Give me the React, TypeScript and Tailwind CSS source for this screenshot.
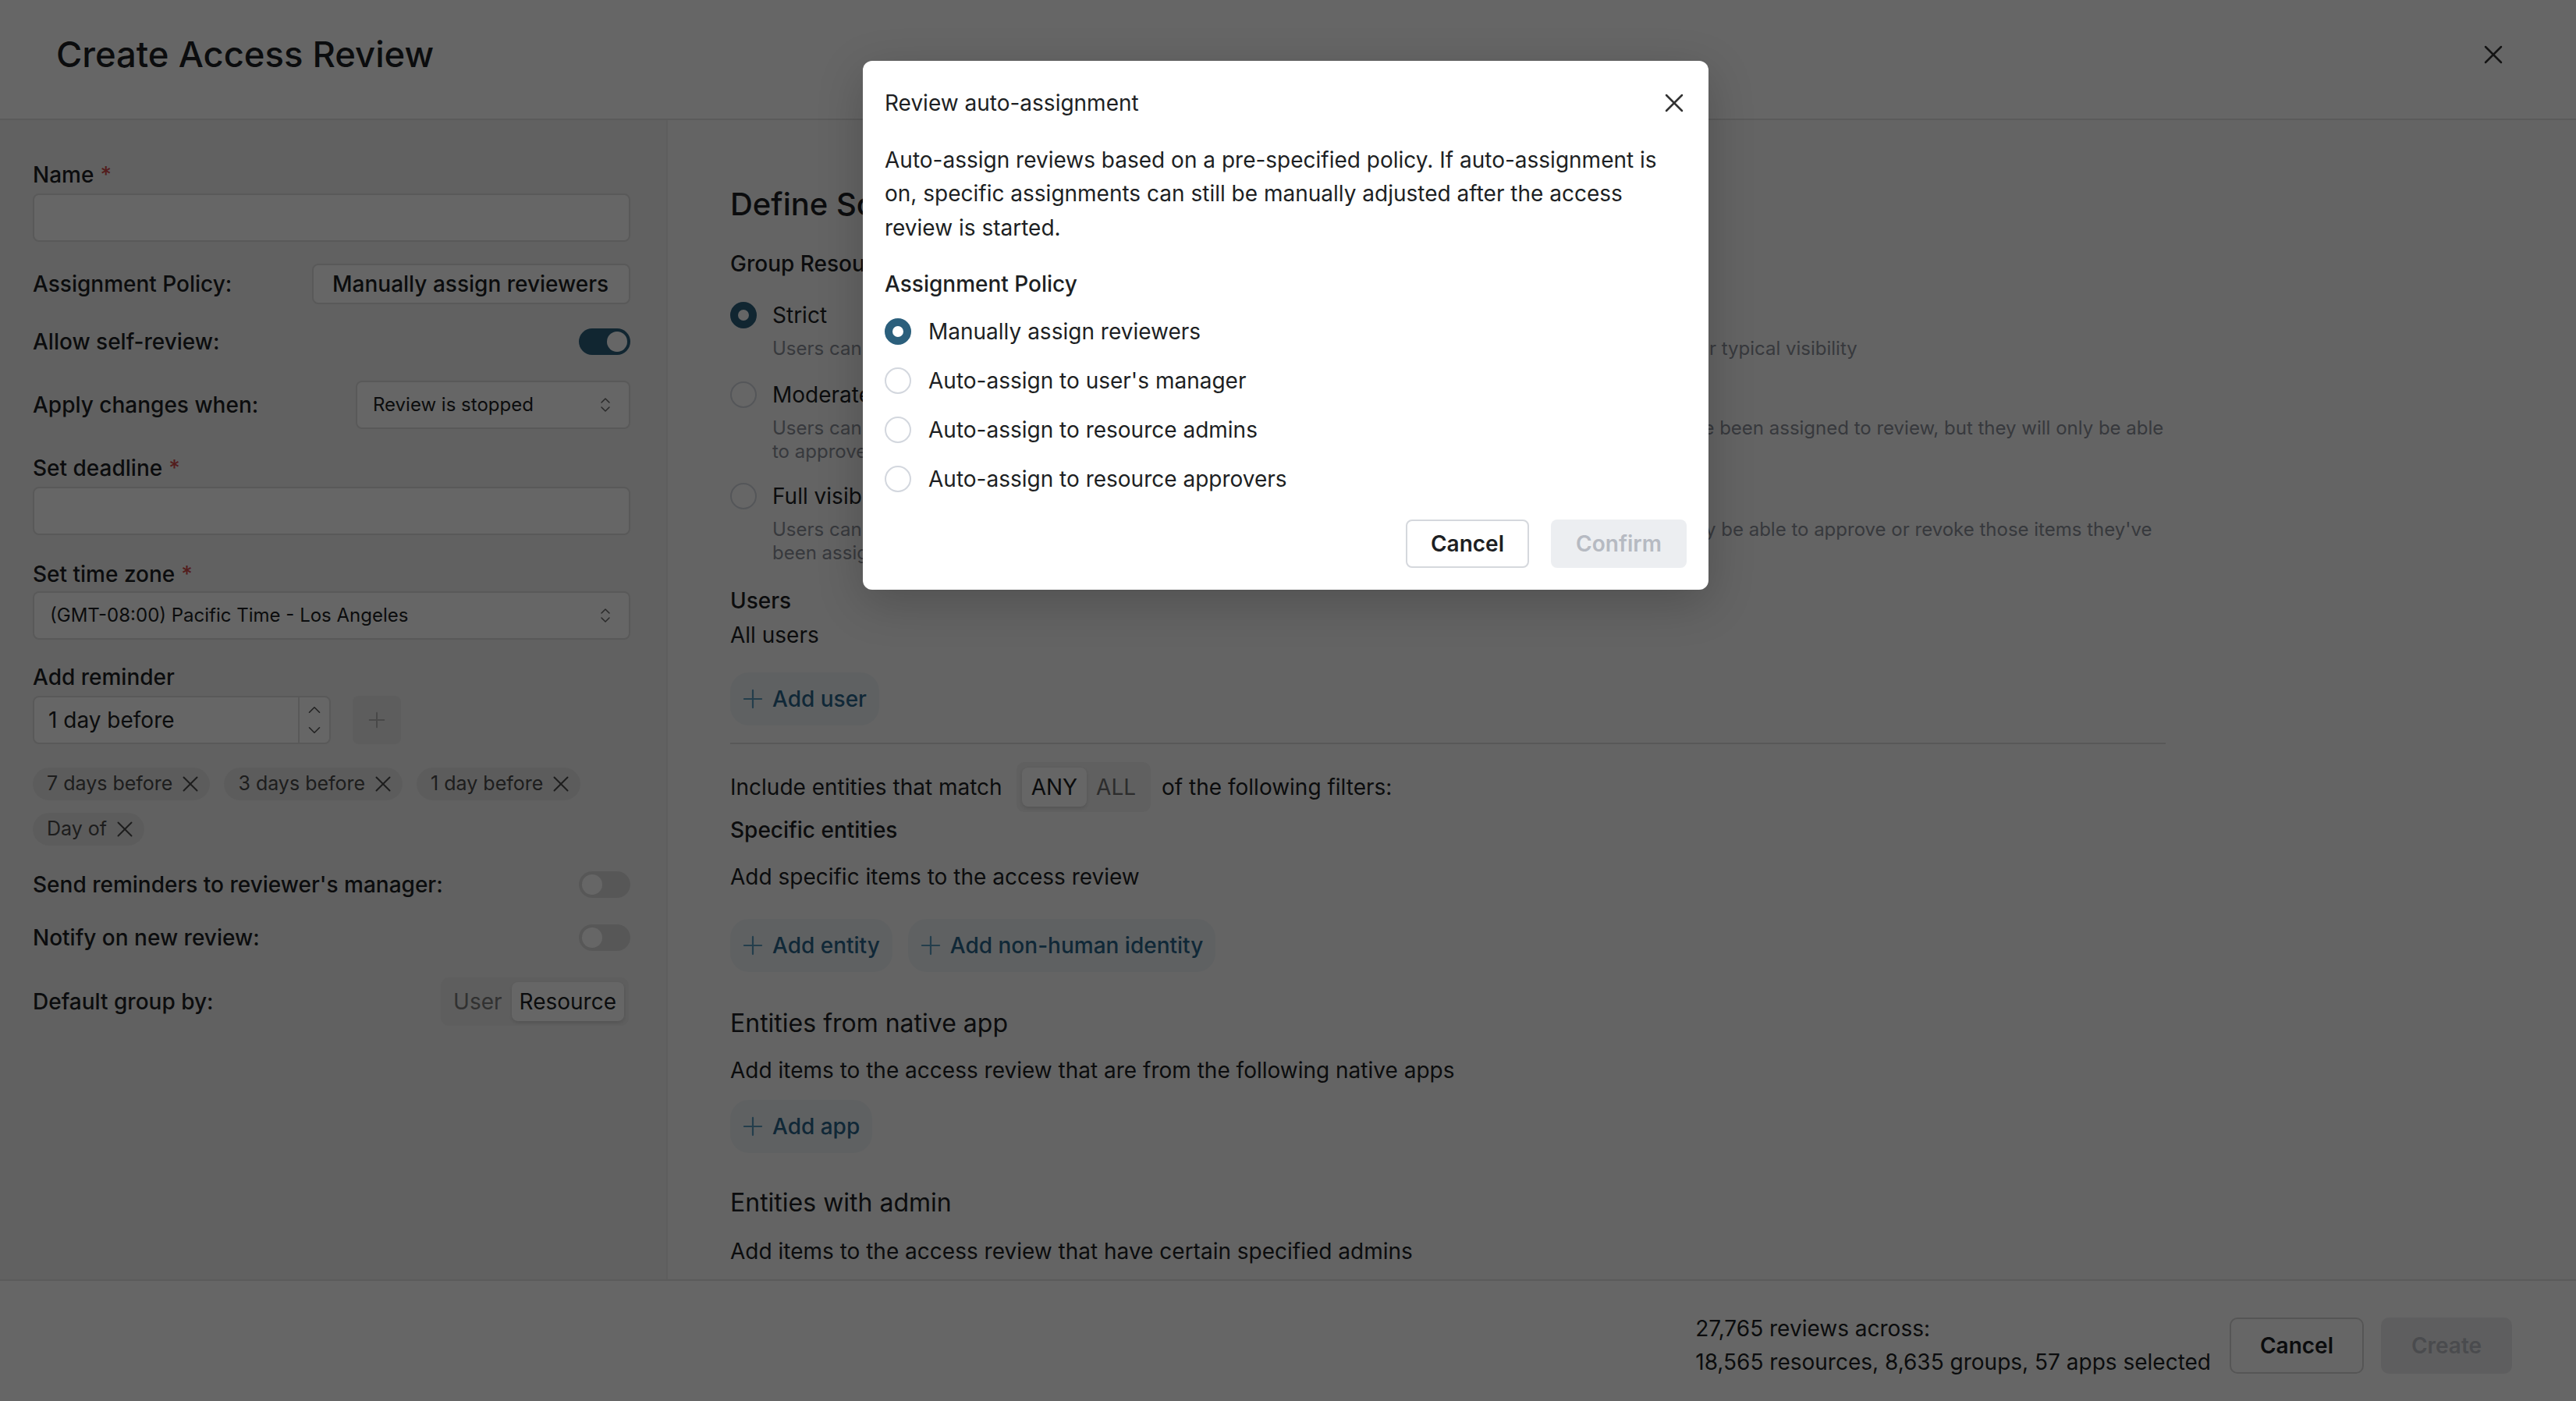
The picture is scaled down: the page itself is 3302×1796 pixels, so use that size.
import React from "react";
import { X, ChevronsUpDown, ChevronUp, ChevronDown, Plus } from "lucide-react";

function Radio({ checked }: { checked?: boolean }) {
  return checked ? (
    <span className="block w-[17px] h-[17px] shrink-0 rounded-full border-[5px] border-[#2b5f7c] bg-white" />
  ) : (
    <span className="block w-[17px] h-[17px] shrink-0 rounded-full border border-[#d3d7de] bg-white" />
  );
}

function Toggle({ on }: { on?: boolean }) {
  return (
    <span
      className={
        on
          ? "flex items-center justify-end w-[33px] h-[17px] rounded-full bg-[#2b5f7c] px-[2px]"
          : "flex items-center justify-start w-[33px] h-[17px] rounded-full bg-[#dadada] px-[2px]"
      }
    >
      <span className="block w-[13px] h-[13px] rounded-full bg-white" />
    </span>
  );
}

function FieldLabel({ children, required }: { children: React.ReactNode; required?: boolean }) {
  return (
    <div className="h-5 leading-5 font-medium">
      {children}
      {required && <span className="ml-[4px] text-[#d04a4a]">*</span>}
    </div>
  );
}

function Chip({ label }: { label: string }) {
  return (
    <span className="inline-flex items-center h-[21px] rounded-full bg-[#e7e7e7] pl-[9px] pr-[4px] gap-[3px] text-[12.5px] text-[#4a4a4a]">
      {label}
      <X size={17} strokeWidth={1.4} />
    </span>
  );
}

function AddButton({ label }: { label: string }) {
  return (
    <button className="flex items-center h-[34px] pl-[5px] pr-[8px] gap-[3px] rounded-[12px] bg-[#eef2f5] text-sm font-medium text-[#2a6489]">
      <Plus size={19} strokeWidth={1.4} className="text-[#5b9cbf]" />
      {label}
    </button>
  );
}

function ScopeOption({
  title,
  checked,
  className,
  children,
}: {
  title: string;
  checked?: boolean;
  className: string;
  children: React.ReactNode;
}) {
  return (
    <div className={"flex gap-[10px] " + className}>
      <div className="h-5 flex items-center">
        <Radio checked={checked} />
      </div>
      <div className="flex flex-col">
        <div className="leading-5">{title}</div>
        <div className="mt-[4px] text-xs leading-[15px] text-[#8a8f98] whitespace-nowrap">{children}</div>
      </div>
    </div>
  );
}

const policies = [
  "Manually assign reviewers",
  "Auto-assign to user's manager",
  "Auto-assign to resource admins",
  "Auto-assign to resource approvers",
];

function Sidebar() {
  return (
    <aside className="w-[428px] shrink-0 bg-[#f3f3f3] border-r border-[#ebebeb] pl-[21px] pr-[23px] pt-[25px] flex flex-col text-sm">
      <FieldLabel required>Name</FieldLabel>
      <div className="mt-[2px] h-[31px] rounded-[4px] border border-[#dedede] bg-white" />

      <div className="mt-[14px] h-[26px] flex items-center justify-between">
        <span className="font-medium">Assignment Policy:</span>
        <button className="h-[26px] w-[204px] rounded-[4px] border border-[#dedede] bg-white font-medium text-left pl-[12px]">
          Manually assign reviewers
        </button>
      </div>

      <div className="mt-[15px] h-[18px] flex items-center justify-between">
        <span className="font-medium">Allow self-review:</span>
        <Toggle on />
      </div>

      <div className="mt-[16px] h-[31px] flex items-center justify-between">
        <span className="font-medium">Apply changes when:</span>
        <div className="h-[31px] w-[176px] rounded-[4px] border border-[#dedede] bg-white flex items-center justify-between pl-[10px] pr-[9px] text-xs">
          <span>Review is stopped</span>
          <ChevronsUpDown size={12} strokeWidth={1.5} className="text-[#666]" />
        </div>
      </div>

      <div className="mt-[15px]">
        <FieldLabel required>Set deadline</FieldLabel>
      </div>
      <div className="mt-[2px] h-[31px] rounded-[4px] border border-[#dedede] bg-white" />

      <div className="mt-[15px]">
        <FieldLabel required>Set time zone</FieldLabel>
      </div>
      <div className="mt-[1px] h-[31px] rounded-[4px] border border-[#dedede] bg-white flex items-center justify-between pl-[10px] pr-[9px] text-xs">
        <span>(GMT-08:00) Pacific Time - Los Angeles</span>
        <ChevronsUpDown size={12} strokeWidth={1.5} className="text-[#666]" />
      </div>

      <div className="mt-[14px]">
        <FieldLabel>Add reminder</FieldLabel>
      </div>
      <div className="mt-[2px] h-[31px] flex items-center">
        <div className="w-[191px] h-full flex rounded-[4px] border border-[#dedede] bg-white">
          <span className="flex-1 flex items-center pl-[9px]">1 day before</span>
          <span className="w-[20px] border-l border-[#dedede] flex flex-col items-center justify-center text-[#555]">
            <ChevronUp size={13} strokeWidth={1.5} />
            <ChevronDown size={13} strokeWidth={1.5} />
          </span>
        </div>
        <span className="ml-[14px] w-[31px] h-full rounded-[4px] bg-[#e8e8e8] flex items-center justify-center text-[#b5b5b5]">
          <Plus size={16} strokeWidth={1.5} />
        </span>
      </div>

      <div className="mt-[15px] flex flex-wrap gap-x-[9px] gap-y-[8px]">
        <Chip label="7 days before" />
        <Chip label="3 days before" />
        <Chip label="1 day before" />
        <Chip label="Day of" />
      </div>

      <div className="mt-[16px] h-[18px] flex items-center justify-between">
        <span className="font-medium">Send reminders to reviewer's manager:</span>
        <Toggle />
      </div>

      <div className="mt-[16px] h-[18px] flex items-center justify-between">
        <span className="font-medium">Notify on new review:</span>
        <Toggle />
      </div>

      <div className="mt-[16px] h-[32px] flex items-center justify-between">
        <span className="font-medium">Default group by:</span>
        <div className="mr-[1px] flex items-center p-[3px] gap-[1px] rounded-[5px] bg-[#ebebeb]">
          <span className="px-[5px] h-[25px] flex items-center text-[#7a7a7a]">User</span>
          <span className="px-[5px] h-[25px] flex items-center rounded-[4px] bg-white shadow-[0_1px_2px_rgba(0,0,0,0.12)]">
            Resource
          </span>
        </div>
      </div>
    </aside>
  );
}

function Scope() {
  return (
    <main className="flex-1 min-w-0 overflow-hidden bg-[#fafafa] pl-[40px] pt-[40px] text-sm">
      <div className="w-[920px] flex flex-col">
        <h2 className="text-[20px] leading-7 font-medium">Define Scope</h2>
        <div className="mt-[14px] leading-5 font-medium">Group Resource Visibility</div>

        <ScopeOption className="mt-[13px]" title="Strict" checked>
          Users can only see those specific items that they have been directly assigned to review, regardless of their typical visibility
        </ScopeOption>
        <ScopeOption className="mt-[12px]" title="Moderate">
          Users can see all items inside of the resources and groups which contain at least one specific item they've been assigned to review, but they will only be able
          <br />
          to approve or revoke the items they have been assigned
        </ScopeOption>
        <ScopeOption className="mt-[11px]" title="Full visibility">
          Users can see all items in the resources and groups that they normally have visibility into, but they will only be able to approve or revoke those items they've
          <br />
          been assigned to review
        </ScopeOption>

        <div className="mt-[13px] leading-5 font-medium">Users</div>
        <div className="mt-[2px] leading-5">All users</div>
        <div className="mt-[14px] flex">
          <AddButton label="Add user" />
        </div>

        <div className="mt-[11px] h-px bg-[#dcdcdc]" />

        <div className="mt-[12px] h-[31px] flex items-center">
          <span>Include entities that match</span>
          <div className="ml-[9px] flex items-center p-[3.5px] rounded-[5px] bg-[#efefef]">
            <span className="px-[6px] h-[25px] flex items-center rounded-[4px] bg-white shadow-[0_1px_2px_rgba(0,0,0,0.12)]">ANY</span>
            <span className="px-[6px] h-[25px] flex items-center text-[#6f6f6f]">ALL</span>
          </div>
          <span className="ml-[7px]">of the following filters:</span>
        </div>

        <div className="mt-[2px] leading-5 font-medium">Specific entities</div>
        <div className="mt-[10px] leading-5">Add specific items to the access review</div>
        <div className="mt-[17px] flex gap-[10px]">
          <AddButton label="Add entity" />
          <AddButton label="Add non-human identity" />
        </div>

        <div className="mt-[21px] text-base leading-6">Entities from native app</div>
        <div className="mt-[8px] leading-5">Add items to the access review that are from the following native apps</div>
        <div className="mt-[9px] flex">
          <AddButton label="Add app" />
        </div>

        <div className="mt-[20px] text-base leading-6">Entities with admin</div>
        <div className="mt-[9px] leading-5">Add items to the access review that have certain specified admins</div>
      </div>
    </main>
  );
}

function AutoAssignModal() {
  return (
    <div className="w-[542px] rounded-[6px] bg-white shadow-[0_8px_30px_rgba(0,0,0,0.2)] px-[14px] pt-[17px] pb-[14px] text-sm text-[#1d1f23]">
      <div className="flex items-center justify-between h-5">
        <span>Review auto-assignment</span>
        <X size={20} strokeWidth={1.5} className="-mr-[2px] text-[#333]" />
      </div>
      <p className="mt-[16px] leading-[21.7px] whitespace-nowrap">
        Auto-assign reviews based on a pre-specified policy. If auto-assignment is
        <br />
        on, specific assignments can still be manually adjusted after the access
        <br />
        review is started.
      </p>
      <div className="mt-[15px] leading-5 font-medium">Assignment Policy</div>
      <div className="mt-[10.5px] flex flex-col gap-[11.5px]">
        {policies.map((p, i) => (
          <div key={p} className="h-5 flex items-center gap-[11px]">
            <Radio checked={i === 0} />
            <span>{p}</span>
          </div>
        ))}
      </div>
      <div className="mt-[16px] flex justify-end gap-[14px]">
        <button className="h-[31px] w-[79px] rounded-[4px] border border-[#d5d8dd] bg-white font-semibold">Cancel</button>
        <button className="h-[31px] w-[87px] rounded-[4px] bg-[#eceef1] text-[#b6bac2] font-semibold">Confirm</button>
      </div>
    </div>
  );
}

export default function App() {
  return (
    <div className="relative w-[1651px] h-[898px] overflow-hidden [zoom:2] bg-white text-[#1d1f23] font-['Inter',sans-serif] flex flex-col">
      <header className="h-[77px] shrink-0 flex items-center justify-between pl-[36px] pr-[43px] pb-[6px] border-b border-[#e3e3e3] bg-white">
        <h1 className="text-[22.7px] leading-7 font-medium">Create Access Review</h1>
        <X size={20} strokeWidth={1.5} className="text-[#333]" />
      </header>

      <div className="flex flex-1 min-h-0">
        <Sidebar />
        <Scope />
      </div>

      <footer className="h-[78px] shrink-0 border-t border-[#e3e3e3] bg-white flex items-center justify-end pr-[41px] pt-[6px] text-sm">
        <div className="leading-[21.7px] mr-[12px]">
          <div>27,765 reviews across:</div>
          <div>18,565 resources, 8,635 groups, 57 apps selected</div>
        </div>
        <button className="h-[36px] w-[86px] rounded-[5px] border border-[#d5d5d5] bg-white font-semibold">Cancel</button>
        <button className="ml-[11px] h-[36px] w-[84px] rounded-[5px] bg-[#ececee] text-[#b9bcc2] font-semibold">Create</button>
      </footer>

      {/* dim backdrop + dialog */}
      <div className="absolute inset-0 bg-black/60" />
      <div className="absolute inset-0 flex justify-center items-start pt-[39px] pr-[3px]">
        <AutoAssignModal />
      </div>
    </div>
  );
}
